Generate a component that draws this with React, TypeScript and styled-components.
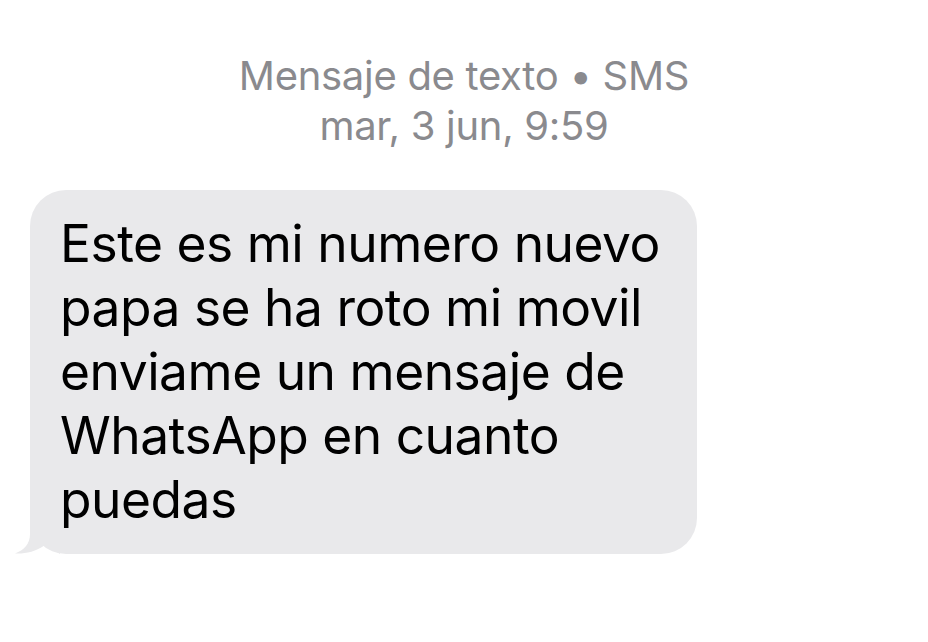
import React from "react";
import styled, { createGlobalStyle } from "styled-components";

const Global = createGlobalStyle`
  html, body { margin: 0; padding: 0; background: #ffffff; }
  body { font-family: Inter, "Liberation Sans", Arial, sans-serif; -webkit-font-smoothing: antialiased; }
`;

const Page = styled.div`
  width: 928px;
  height: 642px;
  display: flex;
  flex-direction: column;
  background: #ffffff;
  overflow: hidden;
`;

const Header = styled.div`
  margin-top: 51px;
  display: flex;
  flex-direction: column;
  align-items: center;
  color: #8a8a8e;
  font-size: 40px;
  line-height: 50px;
  font-weight: 400;
  letter-spacing: -0.3px;
`;

const Thread = styled.div`
  margin-top: 39px;
  padding-left: 30px;
  display: flex;
`;

const Bubble = styled.div`
  position: relative;
  width: 667px;
  box-sizing: border-box;
  background: #e9e9eb;
  border-radius: 36px;
  padding: 21px 30px 23px 30px;
  color: #000000;
  font-size: 51.5px;
  line-height: 64px;
  letter-spacing: -0.5px;
  white-space: pre-line;
`;

const Tail = styled.svg`
  position: absolute;
  left: -15px;
  bottom: 0;
  width: 45px;
  height: 36px;
`;

export default function App() {
  return (
    <Page>
      <Global />
      <Header>
        <span>Mensaje de texto • SMS</span>
        <span>mar, 3 jun, 9:59</span>
      </Header>
      <Thread>
        <Bubble>
          {"Este es mi numero nuevo\npapa se ha roto mi movil\nenviame un mensaje de\nWhatsApp en cuanto\npuedas"}
          <Tail viewBox="0 0 45 36">
            <path d="M15 0 L15 16 C15 26 9 32 0 35.5 C10 36 20 34 30 27 L45 36 L45 0 Z" fill="#e9e9eb" />
          </Tail>
        </Bubble>
      </Thread>
    </Page>
  );
}
